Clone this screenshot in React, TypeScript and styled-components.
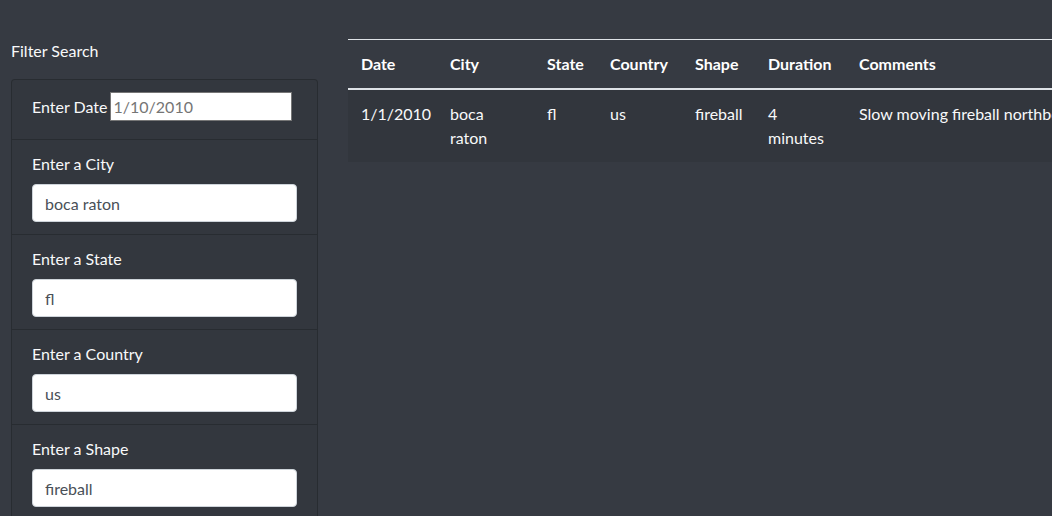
import React from "react";
import styled, { createGlobalStyle } from "styled-components";

const Global = createGlobalStyle`
  html, body {
    margin: 0;
    padding: 0;
    background: #363a42;
    overflow: hidden;
  }
  body {
    font-family: "Lato", "Noto Sans", sans-serif;
    font-size: 16px;
    line-height: 24px;
    color: #f8f9fa;
  }
  * { box-sizing: border-box; }
`;

const Page = styled.div`
  display: flex;
  align-items: flex-start;
  gap: 30px;
  padding: 39px 0 0 11px;
  width: 1600px;
  height: 516px;
`;

const Sidebar = styled.aside`
  width: 307px;
  flex: none;
`;

const SideTitle = styled.div`
  margin-bottom: 16px;
  color: #f8f9fa;
`;

const Card = styled.ul`
  list-style: none;
  margin: 0;
  padding: 0;
  background: #33373e;
  border: 1px solid rgba(0, 0, 0, 0.2);
  border-radius: 4px;
`;

const Item = styled.li<{ $inline?: boolean }>`
  padding: 12px 20px;
  border-top: 1px solid rgba(0, 0, 0, 0.2);
  &:first-child { border-top: 0; }
  ${(p) =>
    p.$inline
      ? `display: flex; align-items: flex-start; gap: 2px; min-height: 59px;`
      : ``}
`;

const Label = styled.label<{ $inline?: boolean }>`
  display: block;
  margin-bottom: ${(p) => (p.$inline ? "0" : "8px")};
  line-height: ${(p) => (p.$inline ? "29px" : "24px")};
  color: #f8f9fa;
`;

const DateInput = styled.input`
  width: 182px;
  height: 29px;
  padding: 1px 3px;
  border: 1px solid #767676;
  border-radius: 0;
  background: #fff;
  font-family: inherit;
  font-size: 16px;
  color: #222;
  outline: none;
  &::placeholder { color: #757575; }
`;

const FieldInput = styled.input`
  display: block;
  width: 100%;
  height: 38px;
  padding: 6px 12px;
  border: 1px solid #ced4da;
  border-radius: 4px;
  background: #fff;
  font-family: inherit;
  font-size: 16px;
  line-height: 24px;
  color: #495057;
  outline: none;
`;

const Table = styled.table`
  border-collapse: collapse;
  table-layout: fixed;
  width: 1100px;
  flex: none;
  color: #fff;
`;

const HeadCell = styled.th`
  text-align: left;
  font-weight: 700;
  padding: 12px 12px 12px 13px;
  line-height: 24px;
  vertical-align: bottom;
  border-top: 1px solid #dee2e6;
  border-bottom: 2px solid #dee2e6;
`;

const BodyRow = styled.tr`
  background: #32363d;
`;

const Cell = styled.td`
  padding: 12px 11px 12px 13px;
  line-height: 24px;
  vertical-align: top;
  color: #f8f9fa;
`;

const columns = [
  { name: "Date", w: 89 },
  { name: "City", w: 97 },
  { name: "State", w: 63 },
  { name: "Country", w: 85 },
  { name: "Shape", w: 73 },
  { name: "Duration", w: 91 },
  { name: "Comments", w: 602 },
];

const row = [
  "1/1/2010",
  "boca raton",
  "fl",
  "us",
  "fireball",
  "4 minutes",
  "Slow moving fireball northbound over the coast of Boca Raton in South Florida",
];

const fields = [
  { label: "Enter a City", value: "boca raton" },
  { label: "Enter a State", value: "fl" },
  { label: "Enter a Country", value: "us" },
  { label: "Enter a Shape", value: "fireball" },
];

export default function App() {
  return (
    <>
      <Global />
      <Page>
        <Sidebar>
          <SideTitle>Filter Search</SideTitle>
          <Card>
            <Item $inline>
              <Label $inline htmlFor="date">Enter Date</Label>
              <DateInput id="date" type="text" placeholder="1/10/2010" />
            </Item>
            {fields.map((f) => (
              <Item key={f.label}>
                <Label>{f.label}</Label>
                <FieldInput type="text" defaultValue={f.value} />
              </Item>
            ))}
          </Card>
        </Sidebar>
        <Table>
          <colgroup>
            {columns.map((c) => (
              <col key={c.name} style={{ width: c.w }} />
            ))}
          </colgroup>
          <thead>
            <tr>
              {columns.map((c) => (
                <HeadCell key={c.name}>{c.name}</HeadCell>
              ))}
            </tr>
          </thead>
          <tbody>
            <BodyRow>
              {row.map((v, i) => (
                <Cell key={i}>{v}</Cell>
              ))}
            </BodyRow>
          </tbody>
        </Table>
      </Page>
    </>
  );
}
